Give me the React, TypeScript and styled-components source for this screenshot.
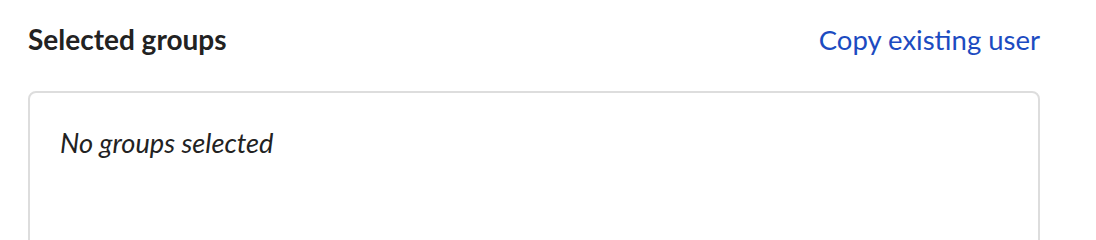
import React from "react";
import styled, { createGlobalStyle } from "styled-components";

const GlobalStyle = createGlobalStyle`
  html, body {
    margin: 0;
    padding: 0;
    background: #ffffff;
  }
  body {
    font-family: Lato, "Noto Sans", sans-serif;
    -webkit-font-smoothing: antialiased;
  }
`;

const Section = styled.section`
  width: 1012px;
  padding: 22px 0 0 28px;
  box-sizing: content-box;
`;

const Header = styled.div`
  display: flex;
  align-items: baseline;
  justify-content: space-between;
  margin-bottom: 34px;
`;

const Title = styled.h2`
  margin: 0;
  font-family: Lato, sans-serif;
  font-weight: 700;
  font-size: 28px;
  line-height: 34px;
  color: #222222;
`;

const LinkButton = styled.button`
  border: none;
  background: none;
  padding: 0;
  font-family: Lato, sans-serif;
  font-weight: 400;
  font-size: 27.5px;
  line-height: 34px;
  color: #1c4bc1;
  cursor: pointer;
`;

const GroupBox = styled.div`
  border: 2px solid #dddddd;
  border-radius: 8px;
  min-height: 200px;
  padding: 33px 30px;
  box-sizing: border-box;
`;

const EmptyText = styled.p`
  margin: 0;
  font-family: Lato, sans-serif;
  font-style: italic;
  font-size: 27.2px;
  line-height: 34px;
  color: #222222;
`;

export default function App() {
  return (
    <>
      <GlobalStyle />
      <Section>
        <Header>
          <Title>Selected groups</Title>
          <LinkButton type="button">Copy existing user</LinkButton>
        </Header>
        <GroupBox>
          <EmptyText>No groups selected</EmptyText>
        </GroupBox>
      </Section>
    </>
  );
}
